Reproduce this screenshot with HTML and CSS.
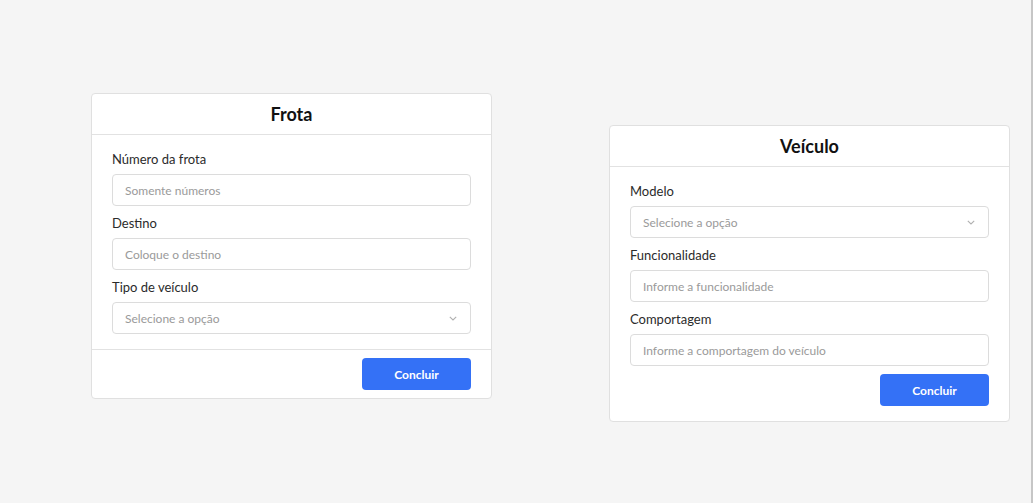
FILE: index.html
```html
<!DOCTYPE html>
<html lang="pt-BR">
<head>
<meta charset="utf-8">
<title>Frota e Veículo</title>
<link rel="stylesheet" href="styles.css">
</head>
<body>
<div class="page">
  <section class="card card-frota">
    <header class="card-header"><h2>Frota</h2></header>
    <div class="card-body">
      <div class="field">
        <label>Número da frota</label>
        <input class="control" type="text" placeholder="Somente números">
      </div>
      <div class="field">
        <label>Destino</label>
        <input class="control" type="text" placeholder="Coloque o destino">
      </div>
      <div class="field">
        <label>Tipo de veículo</label>
        <div class="control select"><span>Selecione a opção</span>
          <svg class="chev" width="8" height="5" viewBox="0 0 8 5"><path d="M0.8 0.8 L4 4 L7.2 0.8" fill="none" stroke="#b0b0b0" stroke-width="1.1"/></svg>
        </div>
      </div>
    </div>
    <footer class="card-footer"><button class="btn">Concluir</button></footer>
  </section>

  <section class="card card-veiculo">
    <header class="card-header"><h2>Veículo</h2></header>
    <div class="card-body">
      <div class="field">
        <label>Modelo</label>
        <div class="control select"><span>Selecione a opção</span>
          <svg class="chev" width="8" height="5" viewBox="0 0 8 5"><path d="M0.8 0.8 L4 4 L7.2 0.8" fill="none" stroke="#b0b0b0" stroke-width="1.1"/></svg>
        </div>
      </div>
      <div class="field">
        <label>Funcionalidade</label>
        <input class="control" type="text" placeholder="Informe a funcionalidade">
      </div>
      <div class="field">
        <label>Comportagem</label>
        <input class="control" type="text" placeholder="Informe a comportagem do veículo">
      </div>
      <div class="actions"><button class="btn">Concluir</button></div>
    </div>
  </section>
</div>
</body>
</html>
```

FILE: styles.css
```css
* { box-sizing: border-box; }
html, body { margin: 0; padding: 0; }
body {
  background: #f5f5f5;
  font-family: Lato, "Noto Sans", sans-serif;
  color: #333;
}
.page {
  width: 1033px;
  height: 503px;
  border-right: 2px solid #c6c6c6;
  display: flex;
  align-items: flex-start;
  padding-left: 91px;
  gap: 117px;
}
.card {
  width: 401px;
  background: #fff;
  border: 1px solid #e0e0e0;
  border-radius: 4px;
}
.card-frota { margin-top: 93px; }
.card-veiculo { margin-top: 125px; }
.card-header {
  height: 41px;
  border-bottom: 1px solid #e2e2e2;
  display: flex;
  align-items: center;
  justify-content: center;
}
.card-header h2 {
  margin: 0;
  font-size: 18px;
  font-weight: 700;
  color: #111;
}
.card-body {
  padding: 15px 20px;
  display: flex;
  flex-direction: column;
  gap: 8px;
}
.field { display: flex; flex-direction: column; }
.field label {
  font-size: 13px;
  line-height: 19px;
  margin-bottom: 5px;
  color: #2b2b2b;
}
.control {
  height: 32px;
  width: 100%;
  border: 1px solid #dcdcdc;
  border-radius: 4px;
  padding: 0 12px;
  font-family: inherit;
  font-size: 12px;
  color: #333;
  background: #fff;
  outline: none;
}
.control::placeholder { color: #9a9a9a; }
.select {
  display: flex;
  align-items: center;
  justify-content: space-between;
  color: #9a9a9a;
}
.chev { margin-right: 1px; }
.card-footer {
  border-top: 1px solid #e2e2e2;
  padding: 8px 20px 8px;
  display: flex;
  justify-content: flex-end;
}
.actions { display: flex; justify-content: flex-end; }
.btn {
  width: 109px;
  height: 32px;
  border: none;
  border-radius: 4px;
  background: #3471f6;
  color: #fff;
  font-family: inherit;
  font-size: 12px;
  font-weight: 700;
}
```
